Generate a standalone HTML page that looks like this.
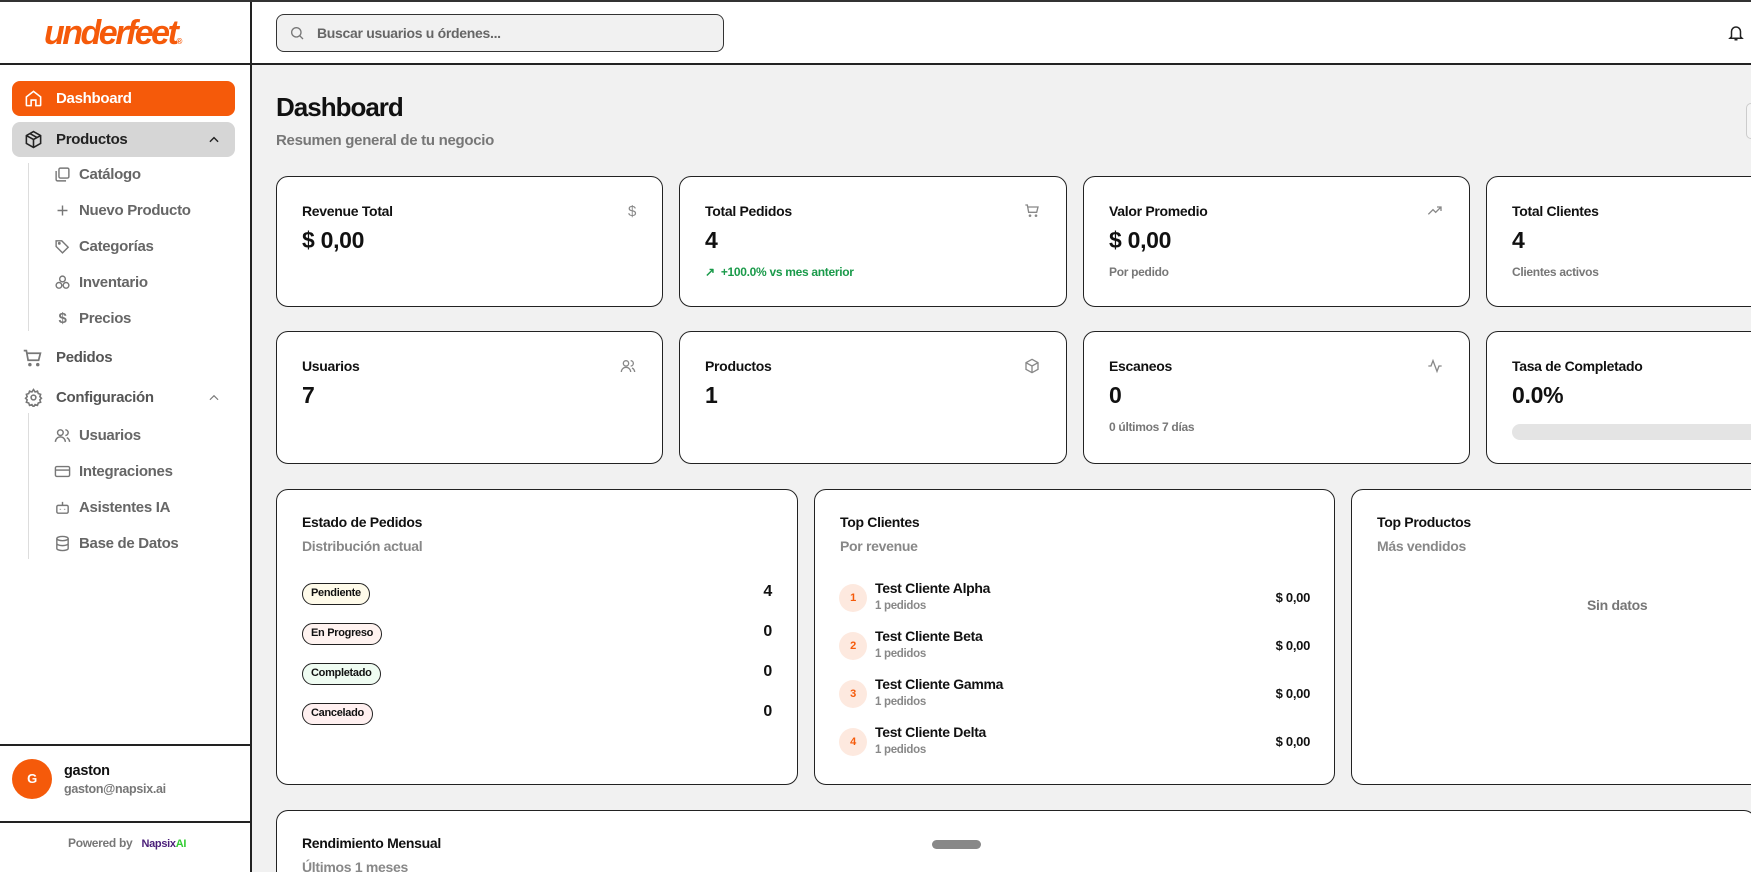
<!DOCTYPE html>
<html style="width:1751px;height:872px;overflow:hidden"><head><meta charset="utf-8"><style>
*{box-sizing:border-box;margin:0;padding:0}
body{width:1751px;height:872px;overflow:hidden;background:#f1f1f1;font-family:"Liberation Sans Narrow","Liberation Sans",sans-serif;color:#111;position:relative;letter-spacing:-0.3px}
.abs{position:absolute}
#top{left:0;top:0;width:1751px;height:2px;background:#333}
#side{left:0;top:0;width:252px;height:872px;background:#fff;border-right:2px solid #222}
#hdr{left:252px;top:0;width:1499px;height:65px;background:#fff;border-bottom:2px solid #222}
.logo{left:44px;top:14px;font:italic 900 34px "Liberation Sans",sans-serif;color:#f55a0a;letter-spacing:-2.5px}
.sidehr{left:0;top:63px;width:252px;height:2px;background:#222}
.nav{left:12px;width:223px;height:35px;border-radius:8px;display:flex;align-items:center;padding-left:44px;font-size:15px;font-weight:bold;color:#222}
.nav svg{position:absolute;left:12px;top:8px}
.sub{left:54px;font-size:15px;font-weight:bold;color:#666;display:flex;align-items:center;gap:8px}
.sub svg{width:17px;height:17px}
.vl{left:28px;width:1px;background:#ddd}
.search{left:276px;top:14px;width:448px;height:38px;border:1.5px solid #333;border-radius:8px;background:#f1f1f1;font-size:14px;color:#666;padding:10px 0 0 40px;font-weight:bold}
.card{position:absolute;background:#fff;border:1.5px solid #222;border-radius:12px}
.ct{position:absolute;left:25px;top:26px;font-size:14px;font-weight:bold}
.cv{position:absolute;left:25px;top:50px;font-size:23px;font-weight:bold}
.cs{position:absolute;left:25px;top:88px;font-size:12px;color:#777;font-weight:bold}
.ci{position:absolute;right:26px;top:26px}
.bt{position:absolute;left:25px;top:24px;font-size:14px;font-weight:bold}
.bs{position:absolute;left:25px;top:48px;font-size:14px;color:#888;font-weight:bold}
.badge{position:absolute;left:25px;height:22px;border:1.5px solid #222;border-radius:11px;font-size:11px;font-weight:bold;padding:3px 8px}
.cnt{position:absolute;right:25px;font-size:16px;font-weight:bold}
.circ{position:absolute;left:24px;width:28px;height:28px;border-radius:50%;background:#fde9df;color:#f55a0a;font-size:11px;font-weight:bold;text-align:center;line-height:28px}
.nm{position:absolute;left:60px;font-size:14px;font-weight:bold}
.pd{position:absolute;left:60px;font-size:11.5px;color:#888;font-weight:bold}
.amt{position:absolute;right:24px;font-size:13px;font-weight:bold}
</style></head><body>
<div class="abs" id="side"></div>
<div class="abs" id="hdr"></div>
<div class="abs" id="top"></div>
<div class="abs logo">underfeet<span style="font-size:8px">®</span></div>
<div class="abs sidehr"></div>

<div class="abs nav" style="top:81px;background:#f55a0a;color:#fff"><svg width="19" height="19" viewBox="0 0 24 24" fill="none" stroke="#fff" stroke-width="2"><path d="M3 10l9-7 9 7v10a1 1 0 0 1-1 1h-5v-7h-6v7H4a1 1 0 0 1-1-1z"/></svg>Dashboard</div>
<div class="abs nav" style="top:122px;background:#d6d6d6"><svg width="19" height="19" viewBox="0 0 24 24" fill="none" stroke="#222" stroke-width="2"><path d="M12 2l9 5v10l-9 5-9-5V7z M3 7l9 5 9-5 M12 12v10 M7.5 4.5l9 5"/></svg>Productos<svg width="14" height="14" viewBox="0 0 24 24" fill="none" stroke="#222" stroke-width="2.5" style="left:auto;right:14px;top:11px"><path d="M5 15l7-7 7 7"/></svg></div>
<div class="abs vl" style="top:163px;height:168px"></div>
<div class="abs sub" style="top:166px"><svg viewBox="0 0 24 24" fill="none" stroke="#777" stroke-width="2"><rect x="7" y="3" width="14" height="14" rx="2"/><path d="M3 7v12a2 2 0 0 0 2 2h12"/></svg>Catálogo</div>
<div class="abs sub" style="top:202px"><svg viewBox="0 0 24 24" fill="none" stroke="#777" stroke-width="2"><path d="M12 5v14M5 12h14"/></svg>Nuevo Producto</div>
<div class="abs sub" style="top:238px"><svg viewBox="0 0 24 24" fill="none" stroke="#777" stroke-width="2"><path d="M3 12V4h8l9 9-8 8z"/><circle cx="7.5" cy="7.5" r="1"/></svg>Categorías</div>
<div class="abs sub" style="top:274px"><svg viewBox="0 0 24 24" fill="none" stroke="#777" stroke-width="2"><circle cx="12" cy="7" r="4"/><circle cx="7" cy="16" r="4"/><circle cx="17" cy="16" r="4"/></svg>Inventario</div>
<div class="abs sub" style="top:310px"><span style="width:17px;text-align:center;color:#777">$</span>Precios</div>
<div class="abs nav" style="top:340px;color:#555"><svg width="21" height="21" viewBox="0 0 24 24" fill="none" stroke="#777" stroke-width="2" style="left:10px"><path d="M2 3h3l2 11h12l2-8H6"/><circle cx="9" cy="19" r="1"/><circle cx="18" cy="19" r="1"/></svg>Pedidos</div>
<div class="abs nav" style="top:380px;color:#555"><svg width="19" height="19" viewBox="0 0 24 24" fill="none" stroke="#777" stroke-width="2"><circle cx="12" cy="12" r="3"/><path d="M12 2l2 3 3-1 1 3 3 1-1 3 2 2-2 2 1 3-3 1-1 3-3-1-2 3-2-3-3 1-1-3-3-1 1-3-2-2 2-2-1-3 3-1 1-3 3 1z"/></svg>Configuración<svg width="14" height="14" viewBox="0 0 24 24" fill="none" stroke="#777" stroke-width="2" style="left:auto;right:14px;top:11px"><path d="M5 15l7-7 7 7"/></svg></div>
<div class="abs vl" style="top:413px;height:146px"></div>
<div class="abs sub" style="top:427px"><svg viewBox="0 0 24 24" fill="none" stroke="#777" stroke-width="2"><circle cx="9" cy="8" r="4"/><path d="M2 21a7 7 0 0 1 14 0M16 4a4 4 0 0 1 0 8M22 21a7 7 0 0 0-4-6"/></svg>Usuarios</div>
<div class="abs sub" style="top:463px"><svg viewBox="0 0 24 24" fill="none" stroke="#777" stroke-width="2"><rect x="2" y="5" width="20" height="14" rx="2"/><path d="M2 10h20"/></svg>Integraciones</div>
<div class="abs sub" style="top:499px"><svg viewBox="0 0 24 24" fill="none" stroke="#777" stroke-width="2"><rect x="4" y="9" width="16" height="11" rx="2"/><path d="M12 4v5M9 14v1M15 14v1"/></svg>Asistentes IA</div>
<div class="abs sub" style="top:535px"><svg viewBox="0 0 24 24" fill="none" stroke="#777" stroke-width="2"><ellipse cx="12" cy="5" rx="8" ry="3"/><path d="M4 5v14c0 1.7 3.6 3 8 3s8-1.3 8-3V5M4 12c0 1.7 3.6 3 8 3s8-1.3 8-3"/></svg>Base de Datos</div>

<div class="abs" style="left:0;top:744px;width:252px;height:2px;background:#222"></div>
<div class="abs" style="left:12px;top:759px;width:40px;height:40px;border-radius:50%;background:#f55a0a;color:#fff;font-weight:bold;font-size:13px;text-align:center;line-height:40px">G</div>
<div class="abs" style="left:64px;top:763px;font-size:14.5px;font-weight:bold">gaston</div>
<div class="abs" style="left:64px;top:782px;font-size:12.5px;color:#777;font-weight:bold">gaston@napsix.ai</div>
<div class="abs" style="left:0;top:821px;width:252px;height:2px;background:#222"></div>
<div class="abs" style="left:68px;top:836px;font-size:12px;color:#777;font-weight:bold">Powered by &nbsp; <span style="color:#4b1f7a;font-size:11px">Napsix</span><span style="color:#3c3;font-size:11px">AI</span></div>

<div class="abs search"><svg class="abs" style="left:12px;top:10px" width="16" height="16" viewBox="0 0 24 24" fill="none" stroke="#777" stroke-width="2"><circle cx="11" cy="11" r="7"/><path d="M16 16l5 5"/></svg>Buscar usuarios u órdenes...</div>
<svg class="abs" style="left:1727px;top:24px" width="18" height="18" viewBox="0 0 24 24" fill="none" stroke="#222" stroke-width="2"><path d="M6 17V10a6 6 0 0 1 12 0v7l2 2H4zM10 21h4"/></svg>
<div class="abs" style="left:1746px;top:103px;width:10px;height:36px;border:1.5px solid #ccc;border-radius:6px;background:#f5f5f5"></div>

<div class="abs" style="left:276px;top:92px;font-size:26px;font-weight:bold;letter-spacing:-1px">Dashboard</div>
<div class="abs" style="left:276px;top:132px;font-size:15px;color:#777;font-weight:bold">Resumen general de tu negocio</div>

<div class="card" style="left:276px;top:176px;width:387px;height:131px"><div class="ct">Revenue Total</div><div class="cv">$ 0,00</div><div class="ci" style="color:#888;font-size:15px">$</div></div>
<div class="card" style="left:679px;top:176px;width:388px;height:131px"><div class="ct">Total Pedidos</div><div class="cv">4</div><div class="cs" style="color:#1a9a4a">↗ &nbsp;+100.0% vs mes anterior</div><svg class="ci" width="16" height="16" viewBox="0 0 24 24" fill="none" stroke="#888" stroke-width="2"><path d="M2 3h3l2 11h12l2-8H6"/><circle cx="9" cy="19" r="1"/><circle cx="18" cy="19" r="1"/></svg></div>
<div class="card" style="left:1083px;top:176px;width:387px;height:131px"><div class="ct">Valor Promedio</div><div class="cv">$ 0,00</div><div class="cs">Por pedido</div><svg class="ci" width="16" height="16" viewBox="0 0 24 24" fill="none" stroke="#888" stroke-width="2"><path d="M2 17l7-7 4 4 8-8M15 6h6v6"/></svg></div>
<div class="card" style="left:1486px;top:176px;width:400px;height:131px"><div class="ct">Total Clientes</div><div class="cv">4</div><div class="cs">Clientes activos</div></div>

<div class="card" style="left:276px;top:331px;width:387px;height:133px"><div class="ct">Usuarios</div><div class="cv">7</div><svg class="ci" width="16" height="16" viewBox="0 0 24 24" fill="none" stroke="#888" stroke-width="2"><circle cx="9" cy="8" r="4"/><path d="M2 21a7 7 0 0 1 14 0M16 4a4 4 0 0 1 0 8M22 21a7 7 0 0 0-4-6"/></svg></div>
<div class="card" style="left:679px;top:331px;width:388px;height:133px"><div class="ct">Productos</div><div class="cv">1</div><svg class="ci" width="16" height="16" viewBox="0 0 24 24" fill="none" stroke="#888" stroke-width="2"><path d="M12 2l9 5v10l-9 5-9-5V7z M3 7l9 5 9-5 M12 12v10"/></svg></div>
<div class="card" style="left:1083px;top:331px;width:387px;height:133px"><div class="ct">Escaneos</div><div class="cv">0</div><div class="cs">0 últimos 7 días</div><svg class="ci" width="16" height="16" viewBox="0 0 24 24" fill="none" stroke="#888" stroke-width="2"><path d="M2 12h4l3-8 6 16 3-8h4"/></svg></div>
<div class="card" style="left:1486px;top:331px;width:400px;height:133px"><div class="ct">Tasa de Completado</div><div class="cv">0.0%</div><div style="position:absolute;left:25px;top:92px;width:400px;height:16px;border-radius:8px;background:#e4e4e4"></div></div>

<div class="card" style="left:276px;top:489px;width:522px;height:296px"><div class="bt">Estado de Pedidos</div><div class="bs">Distribución actual</div>
<div class="badge" style="top:93px;background:#fffbea">Pendiente</div><div class="cnt" style="top:93px">4</div>
<div class="badge" style="top:133px;background:#fff3f0">En Progreso</div><div class="cnt" style="top:133px">0</div>
<div class="badge" style="top:173px;background:#effcf2">Completado</div><div class="cnt" style="top:173px">0</div>
<div class="badge" style="top:213px;background:#fff0f0">Cancelado</div><div class="cnt" style="top:213px">0</div></div>

<div class="card" style="left:814px;top:489px;width:521px;height:296px"><div class="bt">Top Clientes</div><div class="bs">Por revenue</div>
<div class="circ" style="top:94px">1</div><div class="nm" style="top:90px">Test Cliente Alpha</div><div class="pd" style="top:110px">1 pedidos</div><div class="amt" style="top:100px">$ 0,00</div>
<div class="circ" style="top:142px">2</div><div class="nm" style="top:138px">Test Cliente Beta</div><div class="pd" style="top:158px">1 pedidos</div><div class="amt" style="top:148px">$ 0,00</div>
<div class="circ" style="top:190px">3</div><div class="nm" style="top:186px">Test Cliente Gamma</div><div class="pd" style="top:206px">1 pedidos</div><div class="amt" style="top:196px">$ 0,00</div>
<div class="circ" style="top:238px">4</div><div class="nm" style="top:234px">Test Cliente Delta</div><div class="pd" style="top:254px">1 pedidos</div><div class="amt" style="top:244px">$ 0,00</div></div>

<div class="card" style="left:1351px;top:489px;width:521px;height:296px"><div class="bt">Top Productos</div><div class="bs">Más vendidos</div><div style="position:absolute;left:235px;top:107px;font-size:14px;color:#777;font-weight:bold">Sin datos</div></div>

<div class="card" style="left:276px;top:810px;width:1480px;height:80px;border-bottom:none;border-bottom-left-radius:0"><div class="bt">Rendimiento Mensual</div><div class="bs">Últimos 1 meses</div></div>
<div class="abs" style="left:932px;top:840px;width:49px;height:9px;border-radius:5px;background:#888"></div>
</body></html>
